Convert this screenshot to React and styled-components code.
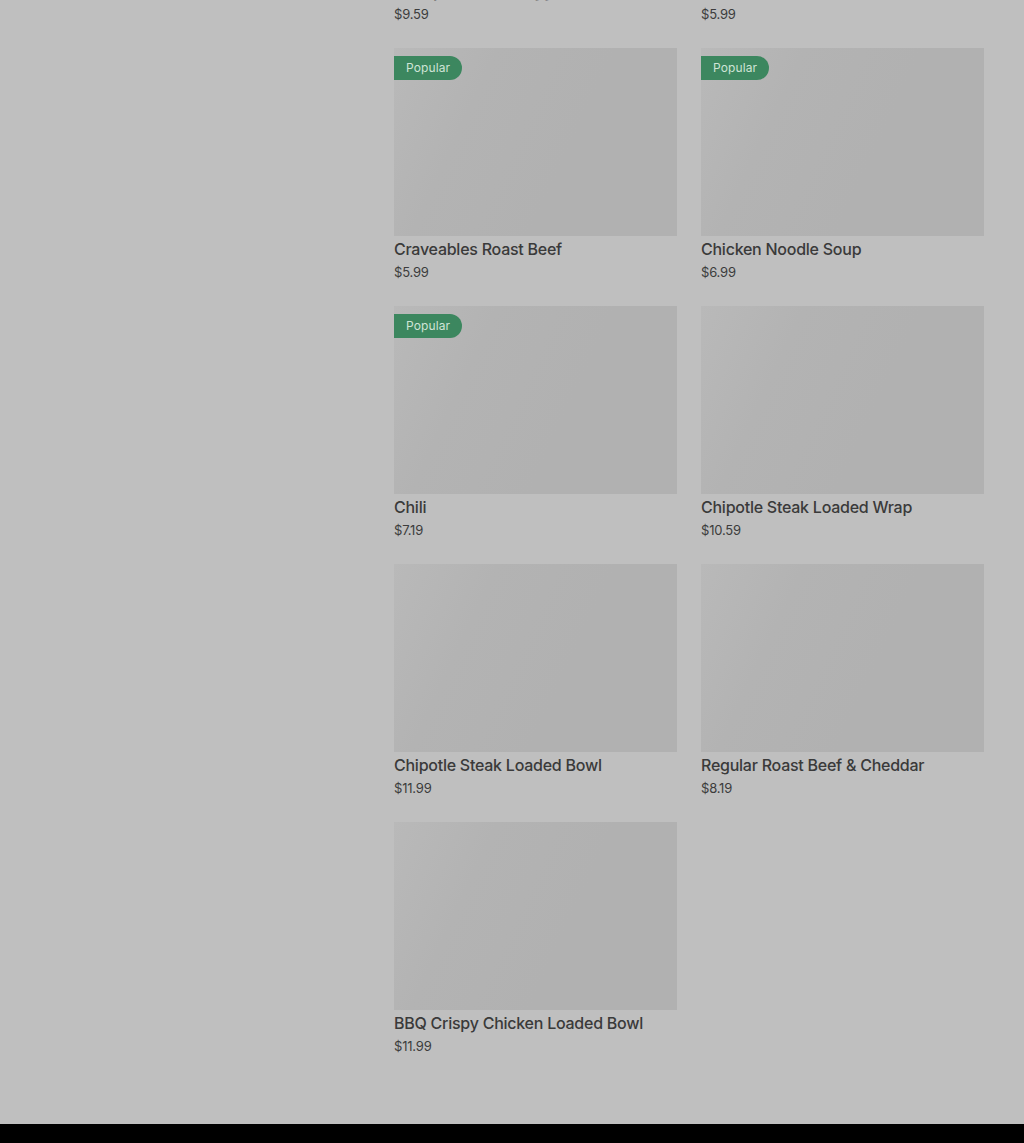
import React from "react";
import styled, { createGlobalStyle } from "styled-components";

const Global = createGlobalStyle`
  html, body { margin: 0; padding: 0; background: #bfbfbf; }
  body { font-family: Inter, "Noto Sans", Arial, sans-serif; }
`;

const Page = styled.div`
  width: 1024px;
  height: 1143px;
  display: flex;
  flex-direction: column;
  overflow: hidden;
  background: #bfbfbf;
`;

const Viewport = styled.div`
  flex: 1;
  overflow: hidden;
  display: flex;
`;

const Sidebar = styled.aside`
  width: 394px;
  flex-shrink: 0;
`;

const Menu = styled.main`
  flex: 1;
  padding-right: 40px;
  padding-bottom: 68px;
  margin-top: -210px;
`;

const Grid = styled.div`
  display: grid;
  grid-template-columns: 283px 283px;
  column-gap: 24px;
  row-gap: 24px;
`;

const Card = styled.div`
  display: flex;
  flex-direction: column;
`;

const Thumb = styled.div`
  position: relative;
  height: 188px;
  background: linear-gradient(115deg, #b9b9b9 0%, #b3b3b3 28%, #b1b1b1 60%, #b1b1b1 100%);
`;

const Badge = styled.span`
  position: absolute;
  top: 8px;
  left: 0;
  height: 24px;
  padding: 0 12px 1px 12px;
  box-sizing: border-box;
  display: flex;
  align-items: center;
  background: #3c875f;
  color: #cfe4d6;
  font-size: 12px;
  letter-spacing: 0.1px;
  border-radius: 0 12px 12px 0;
`;

const Name = styled.div`
  margin-top: 1px;
  font-size: 16px;
  line-height: 24px;
  font-weight: 500;
  letter-spacing: -0.25px;
  color: #3a3a3a;
`;

const Price = styled.div`
  font-size: 13px;
  line-height: 20px;
  margin-top: 1px;
  color: #3c3c3c;
  letter-spacing: -0.2px;
`;

const Footer = styled.footer`
  height: 19px;
  background: #000;
  flex-shrink: 0;
`;

const items = [
  { name: "Crispy Chicken Nuggets", price: "$9.59" },
  { name: "Mac 'n Cheese Poppers", price: "$5.99" },
  { name: "Craveables Roast Beef", price: "$5.99", popular: true },
  { name: "Chicken Noodle Soup", price: "$6.99", popular: true },
  { name: "Chili", price: "$7.19", popular: true },
  { name: "Chipotle Steak Loaded Wrap", price: "$10.59" },
  { name: "Chipotle Steak Loaded Bowl", price: "$11.99" },
  { name: "Regular Roast Beef & Cheddar", price: "$8.19" },
  { name: "BBQ Crispy Chicken Loaded Bowl", price: "$11.99" },
];

export default function App() {
  return (
    <>
      <Global />
      <Page>
        <Viewport>
          <Sidebar />
          <Menu>
            <Grid>
              {items.map((it) => (
                <Card key={it.name}>
                  <Thumb>{it.popular && <Badge>Popular</Badge>}</Thumb>
                  <Name>{it.name}</Name>
                  <Price>{it.price}</Price>
                </Card>
              ))}
            </Grid>
          </Menu>
        </Viewport>
        <Footer />
      </Page>
    </>
  );
}
